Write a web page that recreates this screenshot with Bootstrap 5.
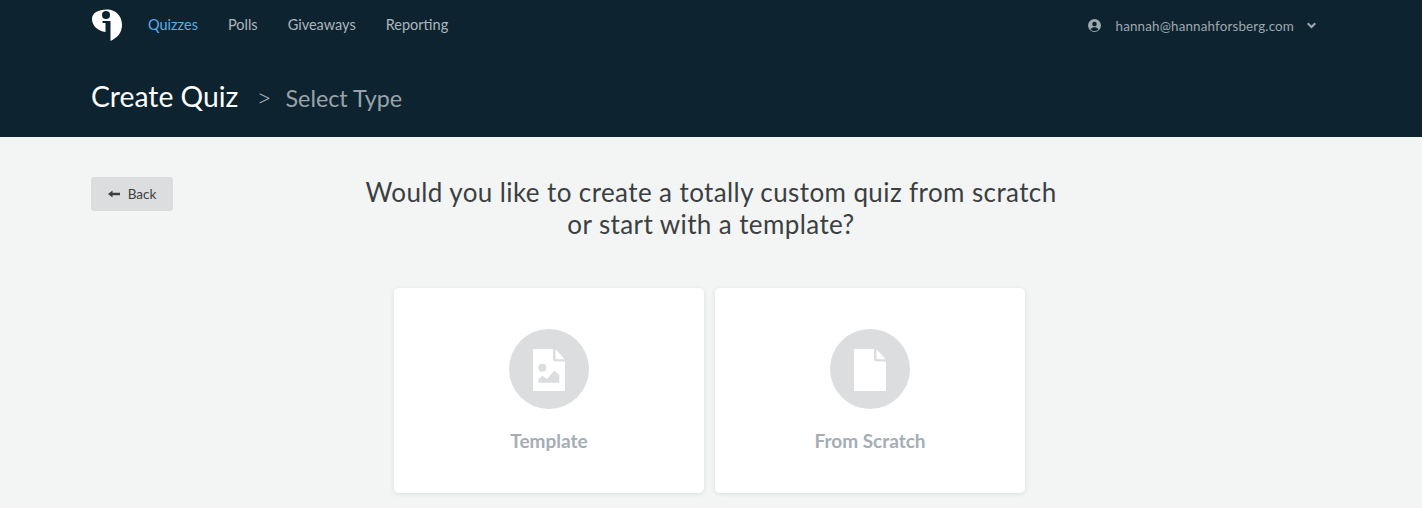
<!DOCTYPE html>
<html lang="en">
<head>
<meta charset="utf-8">
<title>Create Quiz</title>
<link rel="stylesheet" href="https://cdn.jsdelivr.net/npm/bootstrap@5.3.0/dist/css/bootstrap.min.css">
<style>
html, body { height: 100%; }
body { background: #f3f5f4; font-family: Lato, "Open Sans", "Liberation Sans", sans-serif; color: #3c3f42; overflow: hidden; }
.top-head { background: #0d2330; height: 137px; padding: 0 106px 0 91px; }
.top-bar { height: 50px; }
.brand-mark { width: 32px; height: 33px; margin: 9px 25px 0 0; padding: 0; display: block; align-self: flex-start; }
.top-bar .nav-link { color: #aeb6bb; font-size: 14.5px; line-height: 18px; padding: 0; margin-right: 30px; margin-top: -1px; }
.top-bar .nav-link.active { color: #5aaee6; }
.user-box { color: #9ea8ae; font-size: 13.4px; letter-spacing: .16px; padding-top: 2px; }
.user-glyph { margin-right: 15px; }
.user-arrow { margin-left: 13px; }
.page-title { margin-top: 25px; line-height: 40px; }
.title-main { color: #fff; font-size: 28.3px; font-weight: 400; margin: 0; }
.title-sep { color: #aeb6bb; font-size: 26px; font-weight: 300; margin: 0 14px 0 18px; }
.title-sub { color: #99a3a9; font-size: 23.3px; padding-top: 3px; }
.intro-grid { display: grid; grid-template-columns: 1fr auto 1fr; padding-top: 39px; }
.back-cell { padding-left: 91px; padding-top: 1px; }
.btn-back { background: #dcddde; color: #3c3f42; font-size: 13.5px; line-height: 18px; width: 82px; height: 34px; padding: 8px 0; border: 0; border-radius: 3px; }
.btn-back:hover { background: #d2d3d5; color: #3c3f42; }
.intro-text { font-size: 26px; line-height: 32px; font-weight: 400; margin: 0; text-align: center; color: #3c3f42; letter-spacing: .4px; }
.pick-row { margin-top: 48px; gap: 11px; padding-right: 3px; }
.pick-card { width: 310px; height: 205px; border: 0; border-radius: 5px; box-shadow: 0 1px 5px rgba(20,35,45,.1); padding-top: 41px; color: #a3adb4; text-decoration: none; }
.pick-disc { width: 80px; height: 80px; border-radius: 50%; background: #dcddde; }
.pick-disc svg { margin-top: 1px; }
.pick-label { font-size: 19px; font-weight: 700; line-height: 24px; margin-top: 20px; color: #a5aeb5; }
</style>
</head>
<body>
<header class="top-head">
  <div class="top-bar d-flex align-items-center">
    <a class="brand-mark" href="#" aria-label="Home">
      <svg width="32" height="33" viewBox="91 9 32 33"><path fill="#fff" d="M92 19C92 13 98 9.500 107 9.500C116 9.500 122 16 122 25C122 33 117 38 110.500 41V21H102.500V23H105.500V32C98 31 92 26 92 19Z"/><circle cx="106" cy="15" r="4" fill="#0d2330"/></svg>
    </a>
    <nav class="nav">
      <a class="nav-link active" href="#">Quizzes</a>
      <a class="nav-link" href="#">Polls</a>
      <a class="nav-link" href="#">Giveaways</a>
      <a class="nav-link" href="#">Reporting</a>
    </nav>
    <div class="user-box ms-auto d-flex align-items-center">
      <svg width="13" height="13" viewBox="0 0 13 13" class="user-glyph"><circle cx="6.500" cy="6.500" r="6.500" fill="#9ea8ae"/><circle cx="6.500" cy="5" r="2.300" fill="#0d2330"/><path fill="#0d2330" d="M2.600 10.400C3.400 8.800 4.800 8.200 6.500 8.200S9.600 8.800 10.400 10.400C9.400 11.400 8 12 6.500 12S3.600 11.400 2.600 10.400Z"/></svg>
      <span>hannah@hannahforsberg.com</span>
      <svg width="9" height="7" viewBox="0 0 9 7" class="user-arrow"><path d="M.7 1.200L4.500 5L8.300 1.200" fill="none" stroke="#9ea8ae" stroke-width="2"/></svg>
    </div>
  </div>
  <div class="page-title d-flex align-items-center">
    <h1 class="title-main">Create Quiz</h1>
    <span class="title-sep">&gt;</span>
    <span class="title-sub">Select Type</span>
  </div>
</header>
<main>
  <div class="intro-grid">
    <div class="back-cell">
      <a class="btn btn-back d-inline-flex align-items-center justify-content-center" href="#">
        <svg width="12" height="8" viewBox="0 0 12 8" class="me-1"><path fill="#3c3f42" d="M0 4L4.500 .5V2.800H12V5.200H4.500V7.500Z"/></svg>
        <span class="ms-1">Back</span>
      </a>
    </div>
    <h2 class="intro-text">Would you like to create a totally custom quiz from scratch<br>or start with a template?</h2>
    <div></div>
  </div>
  <div class="pick-row d-flex justify-content-center">
    <a class="card pick-card align-items-center" href="#">
      <div class="pick-disc d-flex align-items-center justify-content-center">
        <svg width="32" height="42" viewBox="0 0 32 42"><path fill="#fff" d="M1 0H20V10C20 11.500 21 12.500 22.500 12.500H32V41C32 41.600 31.500 42 31 42H1C.4 42 0 41.600 0 41V1C0 .4 .4 0 1 0Z"/><path fill="#fff" d="M22.500 .3L31.800 10.200H23.500C22.900 10.200 22.500 9.800 22.500 9.200Z"/><circle cx="9.300" cy="18.700" r="4" fill="#dcddde"/><path fill="#dcddde" d="M5.300 33.700V30.300L9.700 26.700L13.700 30L21.300 21.700L26.300 26V33.700Z"/></svg>
      </div>
      <div class="pick-label">Template</div>
    </a>
    <a class="card pick-card align-items-center" href="#">
      <div class="pick-disc d-flex align-items-center justify-content-center">
        <svg width="32" height="42" viewBox="0 0 32 42"><path fill="#fff" d="M1 0H20V10C20 11.500 21 12.500 22.500 12.500H32V41C32 41.600 31.500 42 31 42H1C.4 42 0 41.600 0 41V1C0 .4 .4 0 1 0Z"/><path fill="#fff" d="M22.500 .3L31.800 10.200H23.500C22.900 10.200 22.500 9.800 22.500 9.200Z"/></svg>
      </div>
      <div class="pick-label">From Scratch</div>
    </a>
  </div>
</main>
<script src="https://cdn.jsdelivr.net/npm/bootstrap@5.3.0/dist/js/bootstrap.bundle.min.js"></script>
</body>
</html>
